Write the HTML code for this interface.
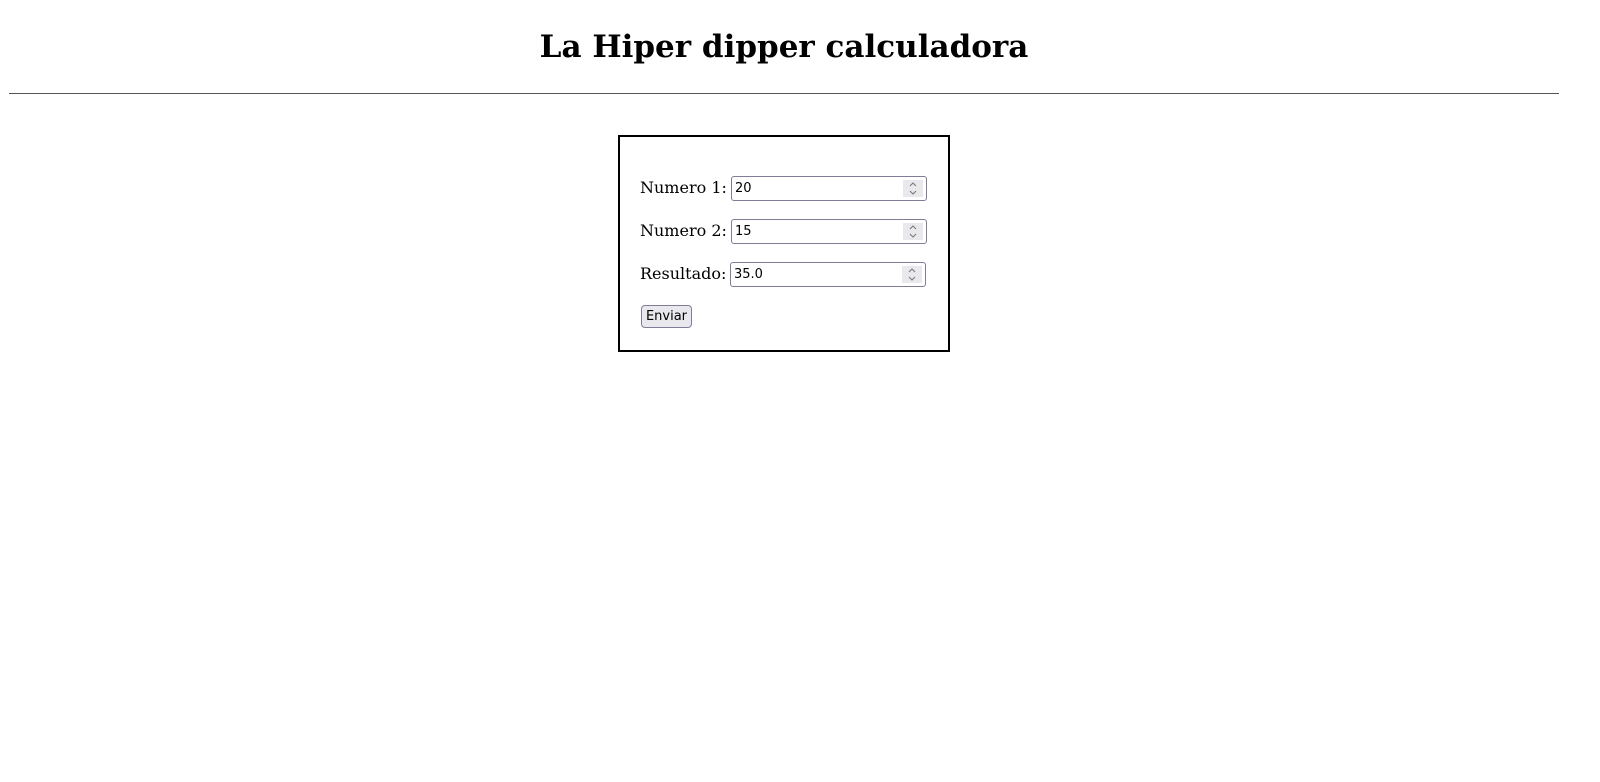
<!DOCTYPE html>
<html><head><style>
body{margin:0;background:#fff;font-family:"DejaVu Serif","Liberation Serif",serif;color:#000}
h1{position:absolute;left:0;width:1568px;top:27px;margin:0;text-align:center;font-size:31px;font-weight:bold;line-height:40px}
.hr{position:absolute;left:9px;width:1550px;top:93px;height:1px;background:#555}
.box{position:absolute;left:618px;top:135px;width:328px;height:213px;border:2px solid #000}
.lbl{position:absolute;left:640px;font-size:16px;line-height:20px}
.inp{position:absolute;border:1px solid #807d99;border-radius:3px;font-family:"DejaVu Sans","Liberation Sans",sans-serif;font-size:13px;line-height:23px;padding-left:3px;box-sizing:border-box;height:25px}
.sp{position:absolute;right:3px;top:3px;width:20px;height:17px;background:#e9e9ed}
.btn{position:absolute;left:641px;top:305px;width:51px;height:23px;box-sizing:border-box;border:1px solid #807d99;border-radius:4px;background:#e9e9ed;font-family:"DejaVu Sans",sans-serif;font-size:13px;line-height:21px;text-align:center}
</style></head><body>
<h1>La Hiper dipper calculadora</h1>
<div class="hr"></div>
<div class="box"></div>
<div class="lbl" style="top:178px">Numero 1:</div>
<div class="inp" style="left:731px;top:176px;width:196px">20<div class="sp"><svg width="20" height="17"><path d="M7 6l3-3 3 3M7 11l3 3 3-3" fill="none" stroke="#777" stroke-width="1"/></svg></div></div>
<div class="lbl" style="top:221px">Numero 2:</div>
<div class="inp" style="left:731px;top:219px;width:196px">15<div class="sp"><svg width="20" height="17"><path d="M7 6l3-3 3 3M7 11l3 3 3-3" fill="none" stroke="#777" stroke-width="1"/></svg></div></div>
<div class="lbl" style="top:264px">Resultado:</div>
<div class="inp" style="left:730px;top:262px;width:196px">35.0<div class="sp"><svg width="20" height="17"><path d="M7 6l3-3 3 3M7 11l3 3 3-3" fill="none" stroke="#777" stroke-width="1"/></svg></div></div>
<div class="btn">Enviar</div>
</body></html>
